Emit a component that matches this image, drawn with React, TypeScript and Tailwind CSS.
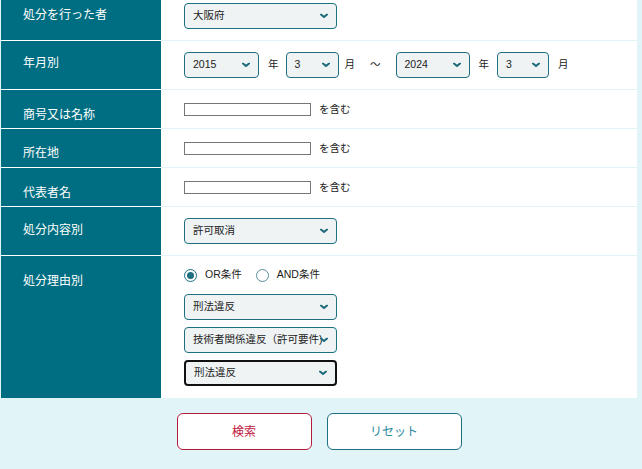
import { ReactNode } from 'react';

const FONT = '"Liberation Sans", "Noto Sans CJK JP", sans-serif';

function Chevron() {
  return (
    <svg width="8" height="5" viewBox="0 0 8 5" className="absolute right-[8px] top-1/2 -translate-y-1/2">
      <path d="M1 1l3 2.6L7 1" fill="none" stroke="#1d6a7b" strokeWidth="2" strokeLinecap="round" strokeLinejoin="round" />
    </svg>
  );
}

function Select({ value, width, focused }: { value: string; width: string; focused?: boolean }) {
  return (
    <div
      className={`relative h-[26px] ${width} shrink-0 rounded-[4px] bg-[#eff3f4] flex items-center pl-[8px] text-[10.5px] text-[#222] whitespace-nowrap overflow-hidden ${
        focused ? 'border-2 border-[#111] pl-[7px]' : 'border border-[#1d6f82]'
      }`}
    >
      {value}
      <Chevron />
    </div>
  );
}

function TextField() {
  return (
    <div className="flex items-center gap-[8px] text-[10.5px] text-[#222]">
      <div className="w-[127px] h-[13px] border border-[#767676] bg-white" />
      <span>を含む</span>
    </div>
  );
}

function Radio({ label, checked }: { label: string; checked?: boolean }) {
  return (
    <div className="flex items-center gap-[8px] text-[10.5px] text-[#222]">
      <span
        className={`w-[13px] h-[13px] rounded-full flex items-center justify-center bg-white border ${
          checked ? 'border-[#1d6f82] border-[1.5px]' : 'border-[#5b8f9c]'
        }`}
      >
        {checked && <span className="w-[7px] h-[7px] rounded-full bg-[#1d6f82]" />}
      </span>
      <span>{label}</span>
    </div>
  );
}

function Row({ label, labelPt, tdClass, children, last }: {
  label: string; labelPt: string; tdClass: string; children: ReactNode; last?: boolean;
}) {
  return (
    <div className="flex">
      <div className={`w-[160px] shrink-0 bg-[#006e82] text-white text-[12px] leading-[18px] pl-[22px] ${labelPt} ${last ? '' : 'border-b border-white'}`}>
        {label}
      </div>
      <div className={`flex-1 bg-white pl-[23px] ${tdClass} ${last ? '' : 'border-b border-[#e0f3f7]'}`}>
        {children}
      </div>
    </div>
  );
}

export default function App() {
  return (
    <div className="min-h-screen bg-[#e1f4f8] pl-[1px] pr-[5px]" style={{ fontFamily: FONT }}>
      <Row label="処分を行った者" labelPt="pt-[6px]" tdClass="h-[41px] pt-[3px]">
        <Select value="大阪府" width="w-[153px]" />
      </Row>
      <Row label="年月別" labelPt="pt-[13px]" tdClass="h-[49px] pt-[11px]">
        <div className="flex items-center text-[10.5px] text-[#222]">
          <Select value="2015" width="w-[75px]" />
          <span className="ml-[9px] mr-[7px]">年</span>
          <Select value="3" width="w-[53px]" />
          <span className="ml-[6px]">月</span>
          <span className="ml-[15px] mr-[15px]">～</span>
          <Select value="2024" width="w-[74px]" />
          <span className="ml-[9px] mr-[8px]">年</span>
          <Select value="3" width="w-[52px]" />
          <span className="ml-[9px]">月</span>
        </div>
      </Row>
      <Row label="商号又は名称" labelPt="pt-[16px]" tdClass="h-[39px] pt-[12px]">
        <TextField />
      </Row>
      <Row label="所在地" labelPt="pt-[15px]" tdClass="h-[39px] pt-[12px]">
        <TextField />
      </Row>
      <Row label="代表者名" labelPt="pt-[16px]" tdClass="h-[39px] pt-[12px]">
        <TextField />
      </Row>
      <Row label="処分内容別" labelPt="pt-[14px]" tdClass="h-[49px] pt-[11px]">
        <Select value="許可取消" width="w-[153px]" />
      </Row>
      <Row label="処分理由別" labelPt="pt-[16px]" tdClass="h-[142px] pt-[12px]" last>
        <div className="flex flex-col">
          <div className="flex items-center gap-[14px] h-[14px]">
            <Radio label="OR条件" checked />
            <Radio label="AND条件" />
          </div>
          <div className="flex flex-col gap-[7px] mt-[12px]">
            <Select value="刑法違反" width="w-[153px]" />
            <Select value="技術者関係違反（許可要件)" width="w-[153px]" />
            <Select value="刑法違反" width="w-[153px]" focused />
          </div>
        </div>
      </Row>
      <div className="flex justify-center gap-[15px] pt-[15px] pb-[19px]">
        <button className="w-[135px] h-[37px] rounded-[6px] bg-white border border-[#b51c3c] text-[#c0163d] text-[12px]">
          検索
        </button>
        <button className="w-[135px] h-[37px] rounded-[6px] bg-white border border-[#1d6f82] text-[#2a88a0] text-[12px]">
          リセット
        </button>
      </div>
    </div>
  );
}
